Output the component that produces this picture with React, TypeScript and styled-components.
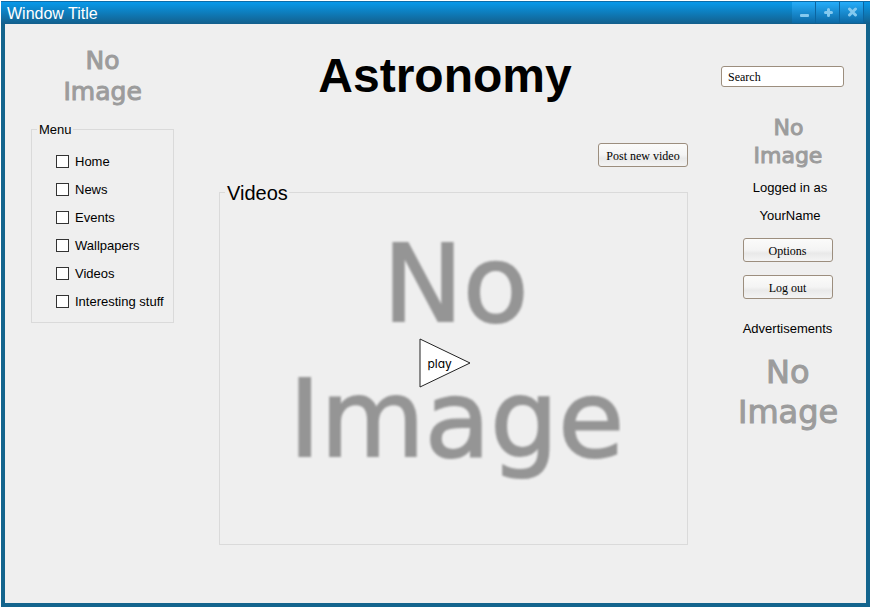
import React from "react";
import styled, { createGlobalStyle } from "styled-components";

const GlobalStyle = createGlobalStyle`
  *, *::before, *::after { box-sizing: border-box; }
  body {
    margin: 0;
    background: #fff;
    color: #000;
    font-family: "Liberation Sans", Arial, sans-serif;
    font-size: 13px;
  }
`;

const Window = styled.div`
  display: flex;
  flex-direction: column;
  min-height: calc(100vh - 4px);
  margin: 1px 0 3px 1px;
  background: #13648d;
`;

const TitleBar = styled.header`
  display: flex;
  justify-content: space-between;
  height: 23px;
  padding: 0 7px 0 6px;
  border-top: 1px solid #0d6ca8;
  background: linear-gradient(#0899ea, #135f8c);
`;

const WindowTitle = styled.span`
  color: #fff;
  font-size: 16px;
  line-height: 23px;
`;

const WindowControls = styled.div`
  display: flex;
  gap: 1px;
  padding-bottom: 1px;
`;

const WindowButton = styled.button`
  display: flex;
  align-items: center;
  justify-content: center;
  width: 23px;
  padding: 0 0 0 1px;
  border: 0;
  background: linear-gradient(#25adfa, #0c69a5);
  box-shadow: 1px 0 0 #0c65a0;
  color: #84c9ef;
`;

const Content = styled.div`
  display: grid;
  flex: 1;
  grid-template-columns: 143px minmax(0, 1fr) 123px;
  column-gap: 33px;
  align-items: start;
  margin: 0 4px 4px;
  padding: 0 22px 0 26px;
  background: #efefef;
`;

const Sidebar = styled.nav`
  display: flex;
  flex-direction: column;
  align-items: center;
  gap: 14px;
  padding-top: 21px;
`;

const Main = styled.main`
  display: flex;
  flex-direction: column;
  padding: 24px 0 0 12px;
`;

const Aside = styled.aside`
  display: flex;
  flex-direction: column;
  padding-top: 42px;
`;

const Account = styled.section`
  display: flex;
  flex-direction: column;
  align-items: center;
  padding: 27px 0 0 10px;
`;

const Heading = styled.h1`
  margin: 0;
  padding-right: 17px;
  font-size: 48px;
  line-height: 56px;
  text-align: center;
`;

const Group = styled.fieldset`
  width: 100%;
  min-width: 0;
  margin: 0;
  padding: 0 5px;
  border: 1px solid #dadada;
`;

const GroupTitle = styled.legend<{ $large?: boolean }>`
  padding: 2px 1px 0 2px;
  font-size: ${(p) => (p.$large ? 20 : 13)}px;
  line-height: ${(p) => (p.$large ? 22 : 14)}px;
`;

const MenuList = styled.ul`
  margin: 0;
  padding: 10px 0 7px 19px;
  list-style: none;
`;

const MenuItem = styled.label`
  display: flex;
  align-items: center;
  gap: 6px;
  height: 28px;
  white-space: nowrap;
`;

const Tick = styled.input`
  appearance: none;
  flex: none;
  width: 13px;
  height: 13px;
  margin: 0;
  border: 1px solid #333;
  background: #fff;

  &:checked {
    box-shadow: inset 0 0 0 2px #fff;
    background: #333;
  }
`;

const Button = styled.button`
  width: 90px;
  height: 24px;
  padding: 2px 0 0;
  border: 1px solid #9c8e7e;
  border-radius: 3px;
  background: linear-gradient(#fbfbfa, #f4f4f4 50%, #e9e9e9 65%, #f4f4f4);
  color: #000;
  font-family: "Liberation Serif", "Times New Roman", serif;
  font-size: 12px;
  white-space: nowrap;
`;

const PostButton = styled(Button)`
  align-self: flex-end;
  margin: 39px 0 13px;
`;

const SearchBox = styled.input`
  width: 100%;
  height: 21px;
  padding: 1px 6px 0;
  border: 1px solid #9c8e7e;
  border-radius: 3px;
  background: #fff;
  color: #000;
  font-family: "Liberation Serif", "Times New Roman", serif;
  font-size: 12px;

  &::placeholder {
    color: #000;
    opacity: 1;
  }
`;

const Caption = styled.span`
  line-height: 28px;
`;

const UserInfo = styled.div`
  display: flex;
  flex-direction: column;
  align-items: center;
  padding: 4px 0 0 5px;
`;

const Actions = styled.div`
  display: flex;
  flex-direction: column;
  gap: 13px;
  padding: 8px 0 16px;
`;

const Picture = styled.div<{ $size: number; $line: number; $width: number; $soft?: boolean }>`
  width: ${(p) => p.$width}px;
  padding-left: ${(p) => (p.$soft ? 3 : 1)}px;
  overflow: hidden;
  font-family: "DejaVu Sans", Verdana, sans-serif;
  font-size: ${(p) => p.$size}px;
  line-height: ${(p) => p.$line}px;
  white-space: nowrap;
`;

const PictureLine = styled.div<{ $indent?: number; $soft?: boolean }>`
  padding-left: ${(p) => p.$indent ?? 0}px;
  color: ${(p) => (p.$soft ? "#959595" : "#9c9c9c")};
  filter: ${(p) => (p.$soft ? "blur(1px)" : "none")};
  -webkit-text-stroke-width: ${(p) => (p.$soft ? 2 : 1)}px;
`;

const VideoArea = styled.div`
  position: relative;
  display: flex;
  justify-content: center;
  padding: 13px 0 57px;
`;

const PlayButton = styled.button`
  position: absolute;
  top: 134px;
  left: calc(50% - 35px);
  display: grid;
  align-items: center;
  width: 52px;
  height: 50px;
  padding: 0;
  border: 0;
  background: none;
  color: #000;

  > * { grid-area: 1 / 1; }
`;

const PlayLabel = styled.span`
  padding: 1px 0 0 9px;
  font-family: Inter, sans-serif;
  font-size: 12px;
  font-feature-settings: "cv11";
  text-align: left;
`;

const AdPicture = styled.div`
  padding-top: 9px;
`;

type NoImageProps = { size: number; line: number; width: number; indent: number; soft?: boolean };

function NoImage({ size, line, width, indent, soft }: NoImageProps) {
  return (
    <Picture $size={size} $line={line} $width={width} $soft={soft}>
      <PictureLine $indent={indent} $soft={soft}>No</PictureLine>
      <PictureLine $soft={soft}>Image</PictureLine>
    </Picture>
  );
}

const menu = ["Home", "News", "Events", "Wallpapers", "Videos", "Interesting stuff"];

export default function App() {
  return (
    <>
      <GlobalStyle />
      <Window>
        <TitleBar>
          <WindowTitle>Window Title</WindowTitle>
          <WindowControls>
            <WindowButton aria-label="Minimize">
              <svg width="11" height="11" viewBox="0 0 11 11">
                <rect x="1" y="7" width="9" height="3" rx="1" fill="currentColor" />
              </svg>
            </WindowButton>
            <WindowButton aria-label="Maximize">
              <svg width="11" height="11" viewBox="0 0 11 11">
                <path d="M5.5 2.5v6M2.5 5.5h6" stroke="currentColor" strokeWidth="3" strokeLinecap="round" />
              </svg>
            </WindowButton>
            <WindowButton aria-label="Close">
              <svg width="11" height="11" viewBox="0 0 11 11">
                <path d="M2.5 2l6 6M8.5 2l-6 6" stroke="currentColor" strokeWidth="3" strokeLinecap="round" />
              </svg>
            </WindowButton>
          </WindowControls>
        </TitleBar>
        <Content>
          <Sidebar>
            <NoImage size={25} line={31} width={80} indent={22} />
            <Group>
              <GroupTitle>Menu</GroupTitle>
              <MenuList>
                {menu.map((name) => (
                  <li key={name}>
                    <MenuItem>
                      <Tick type="checkbox" />
                      {name}
                    </MenuItem>
                  </li>
                ))}
              </MenuList>
            </Group>
          </Sidebar>
          <Main>
            <Heading>Astronomy</Heading>
            <PostButton>Post new video</PostButton>
            <Group>
              <GroupTitle $large>Videos</GroupTitle>
              <VideoArea>
                <NoImage size={107} line={135} width={335} indent={94} soft />
                <PlayButton>
                  <svg width="52" height="50" viewBox="0 0 52 50">
                    <path d="M1 1L51 25L1 49Z" fill="#fff" stroke="#222" />
                  </svg>
                  <PlayLabel>play</PlayLabel>
                </PlayButton>
              </VideoArea>
            </Group>
          </Main>
          <Aside>
            <SearchBox type="text" aria-label="Search" placeholder="Search" />
            <Account>
              <NoImage size={22} line={28} width={70} indent={20} />
              <UserInfo>
                <Caption>Logged in as</Caption>
                <Caption>YourName</Caption>
              </UserInfo>
              <Actions>
                <Button>Options</Button>
                <Button>Log out</Button>
              </Actions>
              <Caption>Advertisements</Caption>
              <AdPicture>
                <NoImage size={32} line={40} width={101} indent={28} />
              </AdPicture>
            </Account>
          </Aside>
        </Content>
      </Window>
    </>
  );
}
